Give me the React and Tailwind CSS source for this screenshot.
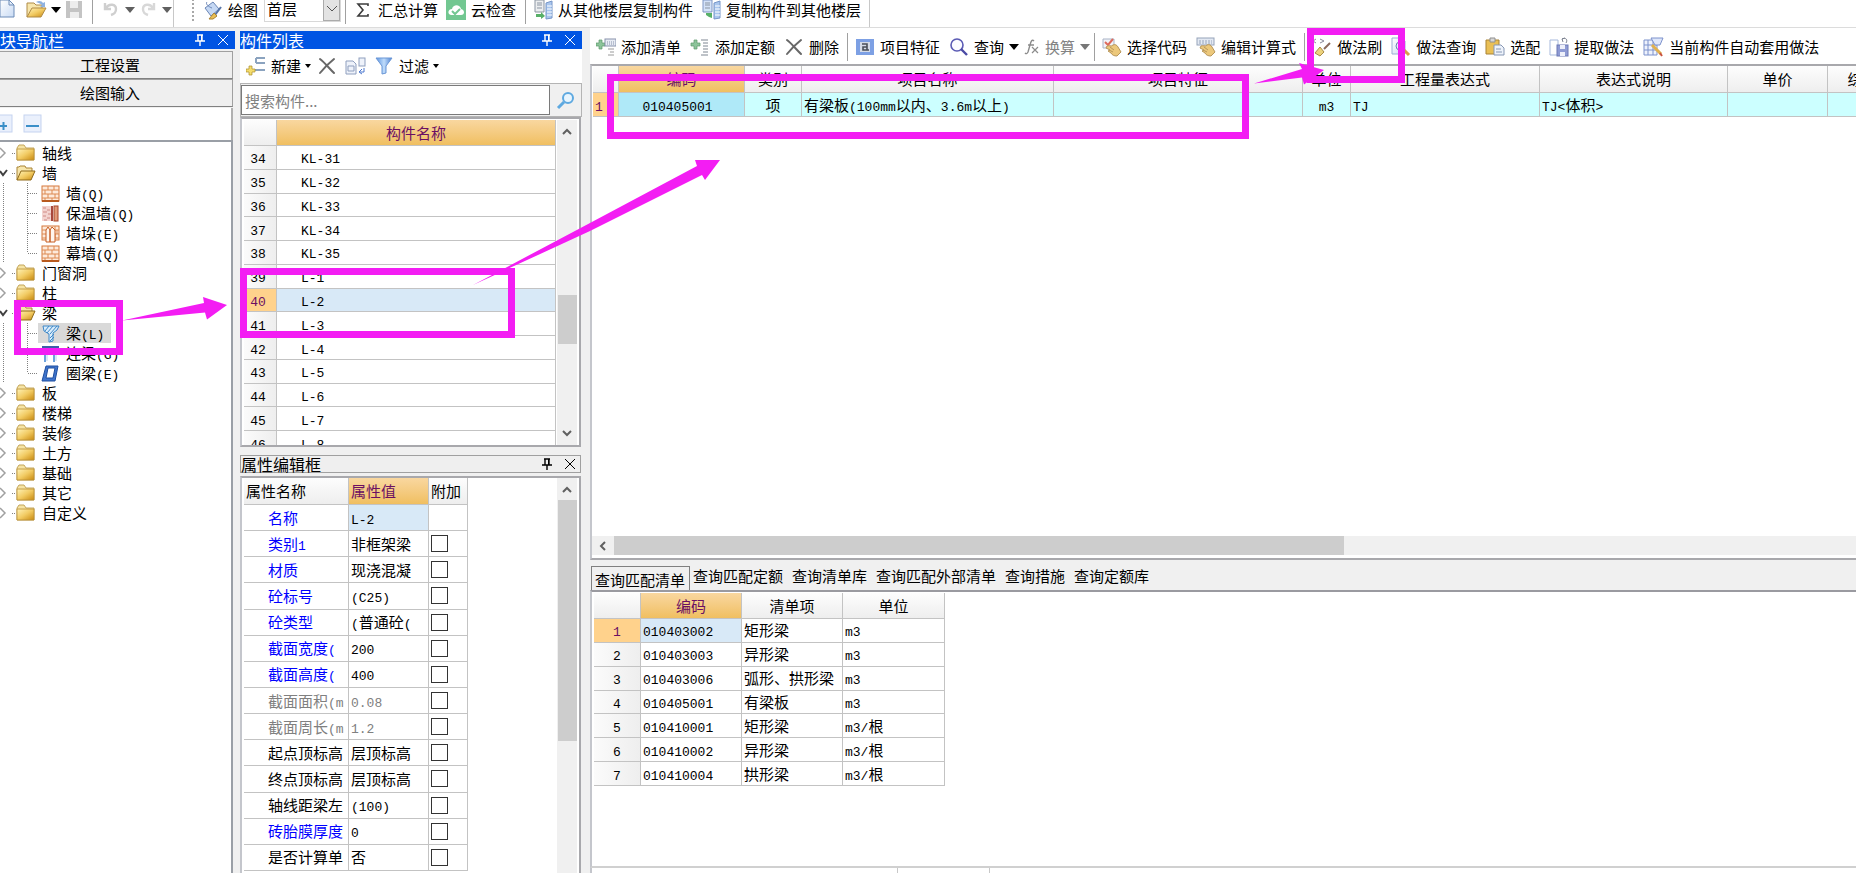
import { Fragment } from "react";
import clsx from "clsx";

const GRID_HEAD = "bg-linear-to-b from-[#fdfdfd] to-[#eeeeee]";
const GRID_HEAD_ACTIVE = "bg-linear-to-b from-[#f9d79f] to-[#f0bf60] text-[#6b0f63]";
const CELL = "border-r border-b border-[#c3c3c3] p-0 overflow-hidden whitespace-nowrap font-normal";

const tree = [
  { label: "轴线" },
  {
    label: "墙",
    open: true,
    children: [
      { label: "墙(Q)", icon: "brick" },
      { label: "保温墙(Q)", icon: "insulated" },
      { label: "墙垛(E)", icon: "pier" },
      { label: "幕墙(Q)", icon: "brick" },
    ],
  },
  { label: "门窗洞" },
  { label: "柱" },
  {
    label: "梁",
    open: true,
    children: [
      { label: "梁(L)", icon: "beam", selected: true },
      { label: "连梁(G)", icon: "linkBeam" },
      { label: "圈梁(E)", icon: "ringBeam" },
    ],
  },
  { label: "板" },
  { label: "楼梯" },
  { label: "装修" },
  { label: "土方" },
  { label: "基础" },
  { label: "其它" },
  { label: "自定义" },
];

const components = [
  "KL-31", "KL-32", "KL-33", "KL-34", "KL-35",
  "L-1", "L-2", "L-3", "L-4", "L-5", "L-6", "L-7", "L-8",
].map((name, i) => ({ no: 34 + i, name }));

const properties = [
  { name: "名称", value: "L-2", color: "text-[#0000ff]", active: true },
  { name: "类别1", value: "非框架梁", color: "text-[#0000ff]" },
  { name: "材质", value: "现浇混凝", color: "text-[#0000ff]" },
  { name: "砼标号", value: "(C25)", color: "text-[#0000ff]" },
  { name: "砼类型", value: "(普通砼(", color: "text-[#0000ff]" },
  { name: "截面宽度(", value: "200", color: "text-[#0000ff]" },
  { name: "截面高度(", value: "400", color: "text-[#0000ff]" },
  { name: "截面面积(m", value: "0.08", color: "text-[#808080]", readOnly: true },
  { name: "截面周长(m", value: "1.2", color: "text-[#808080]", readOnly: true },
  { name: "起点顶标高", value: "层顶标高" },
  { name: "终点顶标高", value: "层顶标高" },
  { name: "轴线距梁左", value: "(100)" },
  { name: "砖胎膜厚度", value: "0", color: "text-[#0000ff]" },
  { name: "是否计算单", value: "否" },
];

const matches = [
  ["010403002", "矩形梁", "m3"],
  ["010403003", "异形梁", "m3"],
  ["010403006", "弧形、拱形梁", "m3"],
  ["010405001", "有梁板", "m3"],
  ["010410001", "矩形梁", "m3/根"],
  ["010410002", "异形梁", "m3/根"],
  ["010410004", "拱形梁", "m3/根"],
];

const tabs = ["查询匹配清单", "查询匹配定额", "查询清单库", "查询匹配外部清单", "查询措施", "查询定额库"];

// Latin runs are set in the monospaced face, Chinese stays in the UI face
const Mixed = ({ children }) =>
  String(children)
    .split(/([\x20-\x7e]+)/)
    .map((part, i) =>
      i % 2 ? (
        <span key={i} className="font-['Liberation_Mono',monospace] text-[13px] leading-none">{part}</span>
      ) : (
        <Fragment key={i}>{part}</Fragment>
      )
    );

const Svg = ({ children, w = 20, h = 20, className }) => (
  <svg width={w} height={h} viewBox={`0 0 ${w} ${h}`} fill="none" className={clsx("shrink-0", className)} aria-hidden="true">
    {children}
  </svg>
);

const Defs = () => (
  <svg width="0" height="0" className="absolute" aria-hidden="true">
    <defs>
      <linearGradient id="gold" x1="0" y1="0" x2="1" y2="1">
        <stop offset="0" stopColor="#fff3b8" />
        <stop offset="0.5" stopColor="#f2cb63" />
        <stop offset="1" stopColor="#c98a10" />
      </linearGradient>
      <linearGradient id="funnel" x1="0" y1="0" x2="1" y2="0">
        <stop offset="0" stopColor="#5b93e0" />
        <stop offset="0.5" stopColor="#bfdcfb" />
        <stop offset="1" stopColor="#4d80d0" />
      </linearGradient>
      <linearGradient id="page" x1="0" y1="0" x2="1" y2="1">
        <stop offset="0" stopColor="#ffffff" />
        <stop offset="1" stopColor="#c9dbf4" />
      </linearGradient>
    </defs>
  </svg>
);

const Caret = ({ className = "text-black", small }) => (
  <Svg w={10} h={6} className={className}>
    <path d={small ? "M2 1h6L5 5z" : "M0 0h10L5 6z"} fill="currentColor" />
  </Svg>
);

const CrossIcon = () => (
  <Svg>
    <path d="M3 3c4 3 9 9 14 14M17 3C12 7 7 12 3 17" stroke="#686868" strokeWidth="2" strokeLinecap="round" />
  </Svg>
);

const Plus = ({ x = 0, y = 0, fill = "#8cc49a", stroke = "#5b9a6c" }) => (
  <path transform={`translate(${x} ${y})`} d="M3 0h3v3h3v3h-3v3h-3v-3h-3v-3h3z" fill={fill} stroke={stroke} strokeWidth="0.7" />
);

const FolderClosed = () => (
  <Svg>
    <path d="M1 5 3 2h5l2 3h8v12H1z" fill="#f5e3a4" stroke="#c4a65c" />
    <path d="M1 6h17v11H1z" fill="url(#gold)" stroke="#b98f38" strokeWidth="0.8" />
  </Svg>
);

const FolderOpen = () => (
  <Svg>
    <path d="M1 17V4h2l1-1h5l1 2h6v4" fill="#f7e6ac" stroke="#a98436" />
    <path d="M1 17 5 8h14l-4 9z" fill="url(#gold)" stroke="#8f6a1b" />
  </Svg>
);

const BrickIcon = () => (
  <Svg w={19} h={19}>
    <rect x="1" y="2" width="17" height="15" fill="#fdeadb" stroke="#d5793d" />
    <path d="M1 6h17M1 10h17M1 14h17M7 2v4M13 2v4M4 6v4M11 6v4M7 10v4M14 10v4M4 14v3M11 14v3" stroke="#dd8a52" />
    <path d="M1 17h17" stroke="#b85a1e" strokeWidth="2" />
  </Svg>
);

const InsulatedIcon = () => (
  <Svg w={19} h={19}>
    <rect x="1" y="2" width="9" height="15" fill="#f3d3cf" />
    <path d="M2 4h3M6 6h3M2 8h4M7 10h3M2 12h3M6 14h3M3 16h3" stroke="#d08a85" />
    <path d="M11 2v15" stroke="#a8483c" strokeWidth="2" />
    <rect x="13" y="2" width="4" height="15" fill="#e09a78" stroke="#a8442b" />
  </Svg>
);

const PierIcon = () => (
  <Svg w={19} h={19}>
    <rect x="1" y="2" width="17" height="14" fill="#fdeadb" stroke="#d5793d" />
    <path d="M1 6h17M1 10h17M1 14h17M14 2v4M16 6v4M14 10v4" stroke="#dd8a52" />
    <path d="M5 6l2-3 2 3v12H5zM9 6l2-3 3 3v12H9z" fill="#fff6ee" stroke="#c65f25" />
  </Svg>
);

const BeamIcon = () => (
  <Svg w={19} h={19}>
    <path d="M2 2h16l-2 4-4 3v8l-4 1V10L3 7z" fill="#d9ecfb" stroke="#3e88c8" />
    <path d="M4 7 8 2M6 9l6-7M9 10l7-8M9 14l4-4M9 17l4-4" stroke="#3e88c8" />
  </Svg>
);

const LinkBeamIcon = () => (
  <Svg w={19} h={19}>
    <path d="M1 2h17v4H1z" fill="#3c5fa8" />
    <path d="M4 6v12M13 6v12" stroke="#6da3dd" strokeWidth="2" />
    <path d="M6 6v11M15 6v11" stroke="#b8d4f0" />
  </Svg>
);

const RingBeamIcon = () => (
  <Svg w={19} h={19}>
    <path d="M5 2h12l-3 15H1z" fill="#3f74cc" stroke="#1e4fa0" />
    <path d="M7 4h7l-2 10H5z" fill="#ffffff" stroke="#1e4fa0" />
  </Svg>
);

const treeIcons = {
  brick: BrickIcon,
  insulated: InsulatedIcon,
  pier: PierIcon,
  beam: BeamIcon,
  linkBeam: LinkBeamIcon,
  ringBeam: RingBeamIcon,
};

const CopyFloorIcon = ({ to }) => (
  <Svg w={21}>
    <path d="M2 0h9v12H2z" fill={to ? "#d4e2f8" : "#eceef0"} stroke={to ? "#7e96c4" : "#8b95a2"} />
    <path d="M4 3h5M4 5h5M4 8h5" stroke="#8b95a2" />
    <path d="M13 3l6-2v17l-6 1z" fill="#a9c6ee" stroke="#7696c8" />
    <path d="M14 6h5M14 9h5M14 12h5M14 15h5" stroke="#fff" />
    <path d={to ? "M5 13h6v5l-3-1-3-2z" : "M3 14h5v-2l4 4-4 3v-2H3z"} fill="#58b068" />
  </Svg>
);

const AddListIcon = () => (
  <Svg>
    <Plus x={0} y={3} />
    <rect x="9" y="2" width="11" height="7" fill="#e8ecf4" stroke="#8792ac" />
    <path d="M11 5h8M11 7h8" stroke="#8792ac" strokeDasharray="1 1" />
    <path d="M12 12h6M14 15h4M12 18h6" stroke="#9a9a9a" />
  </Svg>
);

const AddQuotaIcon = () => (
  <Svg>
    <Plus x={1} y={3} />
    <path d="M11 3h7M13 6h5M13 9h5M13 12h5M13 15h5M11 18h7" stroke="#7f8792" />
  </Svg>
);

const FeatureIcon = () => (
  <Svg>
    <rect x="1" y="2" width="18" height="16" fill="#7da0e4" />
    <rect x="5" y="5" width="10" height="10" fill="#d5dbe6" />
    <path d="M7 7h5v6H8V10h4M12 13h2" stroke="#4a4f58" strokeWidth="1.6" />
  </Svg>
);

const LensIcon = () => (
  <Svg>
    <circle cx="8" cy="8" r="6" stroke="#5a5ab4" strokeWidth="1.6" fill="#fbfbff" />
    <path d="m12 12 6 6" stroke="#4a4aa4" strokeWidth="2.4" />
  </Svg>
);

const FxIcon = () => (
  <Svg w={16}>
    <path d="M10 4c-2-2-3 0-4 4l-2 7c-1 2-2 2-3 1M4 8h6" stroke="#8b8b8b" strokeWidth="1.4" />
    <path d="m8 10 6 6M14 10l-6 6" stroke="#8b8b8b" strokeWidth="1.2" />
  </Svg>
);

const HandCodeIcon = ({ keyboard }) => (
  <Svg>
    {keyboard ? (
      <>
        <rect x="1" y="1" width="17" height="7" fill="#e3e9f3" stroke="#96a3ba" />
        <path d="M3 4h13M3 6h13" stroke="#96a3ba" strokeDasharray="2 1" />
      </>
    ) : (
      <>
        <path d="M1 2h11v9H1z" fill="#f1f3f8" stroke="#a9b3c6" />
        <path d="m3 5 3 3 5-6" stroke="#dd6a5c" strokeWidth="2" />
      </>
    )}
    <path d="M5 9c2-1 4 1 6-1 2-1 4 0 5 2l3 5-4 4c-3 0-5-1-6-3l-3-2 2-1-4-2z" fill="#ecc87b" stroke="#b8965a" />
    <path d="M8 10l4 3M7 13l4 2" stroke="#b8965a" />
  </Svg>
);

const BrushIcon = () => (
  <Svg>
    <path d="M4 2 1 4l3 2M8 2l4 2-4 2" stroke="#8a8a9a" />
    <path d="m18 6-6 6" stroke="#8a6a5c" strokeWidth="2" />
    <path d="m8 10 4 5-4 4-5-3z" fill="#ecd27c" stroke="#a98a45" />
  </Svg>
);

const QueryMethodIcon = () => (
  <Svg>
    <path d="M1 1h10l3 3v13H1z" fill="url(#page)" stroke="#9cafd2" />
    <circle cx="9" cy="9" r="4" stroke="#6c7fae" />
    <path d="m13 13 5 5" stroke="#d99b4c" strokeWidth="3" />
  </Svg>
);

const PasteIcon = () => (
  <Svg>
    <path d="M1 3h13v14H1z" fill="#e9bf55" stroke="#a98335" />
    <path d="M5 1h5v4H5z" fill="#d7d7d7" stroke="#8f8f8f" />
    <path d="M9 8h7l3 3v7H9z" fill="#eef3fb" stroke="#8797b4" />
    <path d="M11 12h5M11 15h6" stroke="#8797b4" />
  </Svg>
);

const ExtractIcon = () => (
  <Svg>
    <path d="M1 3h8v15H1z" fill="#ffffff" stroke="#a7b9dc" />
    <rect x="8" y="8" width="11" height="11" fill="#8f9bd4" stroke="#6c78b4" />
    <path d="M11 8h5v4h-5zM11 15h5v4h-5z" fill="#eef0fa" />
    <path d="M13 2c4-2 6 1 4 4M13 2l1 3M13 2l3-1" stroke="#7c8290" />
  </Svg>
);

const AutoIcon = () => (
  <Svg w={21}>
    <path d="M1 3h13v15H1zM1 8h13M1 13h13M5 3v15M10 3v15" stroke="#7d92cc" fill="#eef2fc" />
    <path d="M8 1h12l-3 7h-5z" fill="#dfe7fa" stroke="#7d92cc" />
    <path d="m9 8 9 9" stroke="#e0b04e" strokeWidth="3" />
    <path d="m17 16 2 3" stroke="#c9533e" strokeWidth="2" />
  </Svg>
);

const NewItemIcon = () => (
  <Svg>
    <path d="M10 2h9M10 7h9M8 14h11M10 2v5" stroke="#8ba3bf" strokeWidth="2" />
    <Plus x={0} y={10} fill="#f4dc6c" stroke="#a98d2c" />
  </Svg>
);

const CopyItemIcon = () => (
  <Svg w={21}>
    <path d="M1 5h7l3 3v10H1z" fill="#eef2fa" stroke="#8f9fbe" />
    <path d="M3 10h6v5H3z" stroke="#8f9fbe" />
    <rect x="14" y="2" width="6" height="8" fill="#eef2fa" stroke="#8f9fbe" />
    <path d="M19 12v4h-4M17 13l-3 3 3 2" stroke="#4d78cf" />
  </Svg>
);

const PinIcon = () => (
  <Svg w={10} h={12}>
    <path d="M2 1h6M3 1v6M7 1v6M0 7h10M5 7v5" stroke="currentColor" strokeWidth="1.4" />
    <path d="M6 1h1v6h-1z" fill="currentColor" />
  </Svg>
);

const CloseIcon = () => (
  <Svg w={12} h={12}>
    <path d="m1 1 10 10M11 1 1 11" stroke="currentColor" />
  </Svg>
);

const ScrollArrow = ({ d }) => (
  <Svg w={10} h={10}>
    <path d={d} stroke="#606060" strokeWidth="2" />
  </Svg>
);

const TitleBar = ({ title, plain }) => (
  <div
    className={clsx(
      "flex h-[18px] shrink-0 items-center",
      plain ? "border border-[#a0a0a0] bg-[#efefef] pr-1 text-black" : "bg-[#0054e3] pr-[6px] text-white"
    )}
  >
    <h2 className="flex-1 text-[16px] leading-[18px] whitespace-nowrap">{title}</h2>
    <button type="button" aria-label="固定" className="mr-3"><PinIcon /></button>
    <button type="button" aria-label="关闭"><CloseIcon /></button>
  </div>
);

const ToolButton = ({ icon, label, caret, disabled }) => (
  <button
    type="button"
    disabled={disabled}
    className={clsx(
      "flex shrink-0 items-center gap-[5px] whitespace-nowrap",
      caret ? "mr-[5px]" : "mr-[9px]",
      disabled && "text-[#838383]"
    )}
  >
    {icon}
    {label}
    {caret && <Caret className={disabled ? "text-[#777]" : "text-black"} />}
  </button>
);

const Separator = () => <span className="-ml-px mr-[7px] h-7 w-px shrink-0 bg-[#a0a0a0]" />;

const TopBar = () => (
  <header className="flex h-7 shrink-0 overflow-hidden border-b border-[#dcdcdc] bg-white">
    <div className="flex h-[27px] shrink-0 items-center border-r border-[#c8c8c8] pb-2">
      <button type="button" aria-label="新建" className="mr-[11px]">
        <Svg w={15}>
          <path d="M0 0h9l5 5v12H0z" fill="url(#page)" stroke="#6c8cb8" />
          <path d="M9 0v5h5" stroke="#6c8cb8" />
        </Svg>
      </button>
      <button type="button" aria-label="打开" className="flex items-center gap-1">
        <Svg w={21}>
          <path d="M1 17V3h7l2 2h6v4" fill="#f7e6ac" stroke="#b08b46" />
          <path d="M1 17 6 8h14l-5 9z" fill="url(#gold)" stroke="#b08b46" />
          <path d="M10 2c3-2 6-1 7 1l2-1v5h-5l2-2c-1-1-3-2-6-3" fill="#8fb2e0" />
        </Svg>
        <Caret />
      </button>
      <button type="button" aria-label="保存" className="ml-[3px]">
        <Svg>
          <path d="M2 1h16v17H2z" fill="#c4c4c4" />
          <path d="M6 1h8v7H6zM6 12h9v6H6z" fill="#ededed" />
        </Svg>
      </button>
      <span className="mx-2 h-7 w-px bg-[#a0a0a0]" />
      <button type="button" aria-label="撤销" className="flex items-center gap-1" disabled>
        <Svg>
          <path d="M4 3v6h6M5 8c3-5 10-4 10 1 0 4-2 5-5 6" stroke="#cfcfcf" strokeWidth="2.4" />
        </Svg>
        <Caret className="text-[#606060]" />
      </button>
      <button type="button" aria-label="重做" className="mr-px ml-[3px] flex items-center gap-1" disabled>
        <Svg>
          <path d="M16 3v6h-6M15 8c-3-5-10-4-10 1 0 4 2 5 5 6" stroke="#d8d8d8" strokeWidth="2.4" />
        </Svg>
        <Caret className="text-[#606060]" />
      </button>
    </div>
    <div className="flex h-[27px] shrink-0 items-center border-r border-[#c8c8c8] pr-2 pb-2">
      <span className="mr-[9px] ml-[18px] h-[22px] border-l-2 border-dotted border-[#a8a8a8]" />
      <button type="button" className="mr-[6px] flex items-center gap-[5px]">
        <Svg>
          <path d="m2 8 8-6 6 7-8 7z" fill="#c5d8f4" stroke="#6b86b6" />
          <path d="M4 2c-2 2 2 5 5 6" stroke="#6b86b6" />
          <path d="m18 7-6 8" stroke="#5876a8" strokeWidth="2" />
          <path d="m11 13 3 3-4 3H6z" fill="#e9bf55" stroke="#a98335" />
        </Svg>
        绘图
      </button>
      <label className="flex h-6 items-center border border-t-0 border-[#d8d8d8]">
        <select aria-label="楼层" defaultValue="首层" className="w-[58px] appearance-none bg-transparent pl-[2px] outline-none">
          <option>首层</option>
        </select>
        <span className="flex h-6 w-[17px] items-center justify-center border border-[#ababab] bg-[#e3e3e3]">
          <Svg w={12} h={8}>
            <path d="m1 1 5 5 5-5" stroke="#555" />
          </Svg>
        </span>
      </label>
      <span className="mr-[7px] ml-1 h-7 w-px bg-[#a0a0a0]" />
      <button type="button" className="mr-2 flex items-center gap-[5px]">
        <Svg>
          <path d="M15 6V4H5l5 6-5 6h10v-2" stroke="#3c3c3c" strokeWidth="1.6" />
        </Svg>
        汇总计算
      </button>
      <button type="button" className="mr-[9px] flex items-center gap-[5px]">
        <Svg>
          <rect width="20" height="20" fill="#72c791" />
          <path d="M5 15c-4-1-3-6 1-6 1-5 8-5 9 0 4 1 4 6 0 6z" fill="#fff" />
          <path d="m6 11 3 3 5-5" stroke="#72c791" strokeWidth="2" />
        </Svg>
        云检查
      </button>
      <span className="mr-[7px] h-7 w-px bg-[#a0a0a0]" />
      <button type="button" className="mr-2 flex items-center gap-1">
        <CopyFloorIcon />
        从其他楼层复制构件
      </button>
      <button type="button" className="flex items-center gap-1">
        <CopyFloorIcon to />
        复制构件到其他楼层
      </button>
    </div>
  </header>
);

const TreeNode = ({ node }) => (
  <li>
    <div className="flex h-5 items-center">
      <Svg w={8} h={12}>
        {node.open ? (
          <path d="m0 4 3 4 4-5" stroke="#404040" strokeWidth="2" />
        ) : (
          <path d="m0 1 5 5-5 5" stroke="#a0a0a0" strokeWidth="1.5" />
        )}
      </Svg>
      <span className="mr-px ml-1 w-[3px] border-t border-dotted border-[#808080]" />
      {node.open ? <FolderOpen /> : <FolderClosed />}
      <span className="ml-[6px]">{node.label}</span>
    </div>
    {node.children && (
      <ul>
        {node.children.map((child, i) => {
          const Icon = treeIcons[child.icon];
          const last = i === node.children.length - 1;
          return (
            <li key={child.label} className="flex h-5 items-center">
              <Svg w={38}>
                <path d={`M3.5 0v20M27.5 0v${last ? 10 : 20}M28 10.5h10`} stroke="#808080" strokeDasharray="1 1" />
              </Svg>
              <span className={clsx("flex h-5 items-center gap-[6px] pr-[7px] pl-[3px]", child.selected && "bg-[#d9d9d9]")}>
                <Icon />
                <span><Mixed>{child.label}</Mixed></span>
              </span>
            </li>
          );
        })}
      </ul>
    )}
  </li>
);

const NavPanel = () => (
  <aside className="flex w-[235px] shrink-0 flex-col pt-[3px]">
    <TitleBar title="块导航栏" />
    <div className="mt-[2px] mr-[2px] flex shrink-0 flex-col">
      {["工程设置", "绘图输入"].map((label) => (
        <button key={label} type="button" className="h-7 border border-l-0 border-[#a0a0a0] border-b-[#808080] bg-[#efefef] pr-3">
          {label}
        </button>
      ))}
    </div>
    <div className="mt-px mr-[2px] flex h-8 shrink-0 items-center gap-[9px] border-r-2 border-[#b0b0b0] bg-white">
      <button type="button" aria-label="展开">
        <Svg w={14}>
          <rect x="-4" y="1" width="16" height="17" fill="#eaf0fc" stroke="#c5d3f0" />
          <path d="M0 12h7M3.5 8v8" stroke="#3b8fc8" strokeWidth="2" />
        </Svg>
      </button>
      <button type="button" aria-label="折叠">
        <Svg>
          <rect x="1" y="1" width="17" height="17" fill="#eaf0fc" stroke="#c5d3f0" />
          <path d="M3 12h13" stroke="#3b8fc8" strokeWidth="2" />
        </Svg>
      </button>
    </div>
    <nav className="mr-[2px] flex-1 overflow-hidden border-t-2 border-r-2 border-[#9a9fa6] bg-white pt-px">
      <ul>
        {tree.map((node) => (
          <TreeNode key={node.label} node={node} />
        ))}
      </ul>
    </nav>
  </aside>
);

const ComponentList = () => (
  <section className="flex shrink-0 flex-col">
    <TitleBar title="构件列表" />
    <div className="flex h-[34px] items-center bg-white pl-[6px]">
      <button type="button" className="mr-1 flex items-center gap-[5px]">
        <NewItemIcon />
        <span className="flex items-center gap-[2px]">新建<Caret small /></span>
      </button>
      <button type="button" aria-label="删除" className="mr-2"><CrossIcon /></button>
      <button type="button" aria-label="复制" className="mr-2"><CopyItemIcon /></button>
      <button type="button" className="flex items-center gap-[5px]">
        <Svg>
          <path d="M2 2h16l-6 8v7l-4 1v-8z" fill="url(#funnel)" stroke="#6b97d6" />
        </Svg>
        <span className="flex items-center gap-[2px]">过滤<Caret small /></span>
      </button>
    </div>
    <div className="flex h-[34px] items-center border border-[#b4b4b4] bg-[#f0f0f0]">
      <input
        type="text"
        aria-label="搜索构件"
        placeholder="搜索构件..."
        className="h-[30px] min-w-0 flex-1 border border-[#7a7a7a] bg-white px-[3px] outline-none placeholder:text-[#808080]"
      />
      <button type="button" aria-label="搜索" className="flex w-[31px] justify-center">
        <Svg>
          <circle cx="12" cy="8" r="5" stroke="#5ea9e0" strokeWidth="2" fill="#e8f5fe" />
          <path d="m8 12-6 6" stroke="#5ea9e0" strokeWidth="3" />
        </Svg>
      </button>
    </div>
    <div className="mr-px flex h-[330px] overflow-hidden border-t-2 border-r-2 border-b-2 border-l-2 border-[#a8a8ac] border-l-[#c4c6cc] bg-white pt-px pr-[2px] pl-[2px]">
      <div className="flex-1 overflow-hidden">
        <table className="h-[335px] w-[312px] table-fixed border-separate border-spacing-0">
          <colgroup>
            <col className="w-[33px]" />
            <col />
          </colgroup>
          <thead>
            <tr className="h-[26px]">
              <th className={clsx(CELL, GRID_HEAD)} aria-label="序号" />
              <th className={clsx(CELL, GRID_HEAD_ACTIVE)}>构件名称</th>
            </tr>
          </thead>
          <tbody>
            {components.map(({ no, name }) => {
              const active = name === "L-2";
              return (
                <tr key={no}>
                  <td className={clsx(CELL, "pr-1 text-center", active ? "bg-[#ffd28c] text-[#6b0f63]" : "bg-linear-to-r from-[#fbfbfb] to-[#eeeeee]")}>
                    <Mixed>{no}</Mixed>
                  </td>
                  <td className={clsx(CELL, "pl-6", active && "bg-[#d8e9f7]")}><Mixed>{name}</Mixed></td>
                </tr>
              );
            })}
          </tbody>
        </table>
      </div>
      <div className="flex w-5 flex-col items-center bg-[#f0f0f0] py-[7px]">
        <ScrollArrow d="m1 7 4-4 4 4" />
        <div className="mt-[158px] mb-auto h-[49px] w-[19px] bg-[#cdcdcd]" />
        <ScrollArrow d="m1 3 4 4 4-4" />
      </div>
    </div>
  </section>
);

const PropertyEditor = () => (
  <section className="mt-2 mr-px flex min-h-0 flex-1 flex-col">
    <TitleBar title="属性编辑框" plain />
    <div className="mt-[3px] flex min-h-0 flex-1 overflow-hidden border-t-2 border-r-2 border-l-2 border-[#a8a8ac] border-l-[#c4c6cc] bg-white pr-[2px] pl-[2px]">
      <div className="flex-1">
        <table className="h-[393px] w-[224px] table-fixed border-separate border-spacing-0 text-left">
          <colgroup>
            <col className="w-[105px]" />
            <col className="w-[80px]" />
            <col className="w-[39px]" />
          </colgroup>
          <thead>
            <tr className="h-[27px]">
              <th className={clsx(CELL, GRID_HEAD, "pl-[2px]")}>属性名称</th>
              <th className={clsx(CELL, GRID_HEAD_ACTIVE, "pl-[2px]")}>属性值</th>
              <th className={clsx(CELL, GRID_HEAD, "pl-[2px]")}>附加</th>
            </tr>
          </thead>
          <tbody>
            {properties.map((p) => (
              <tr key={p.name} className="h-[26px]">
                <td className={clsx(CELL, "pl-6", p.color)}><Mixed>{p.name}</Mixed></td>
                <td className={clsx(CELL, "pl-[2px]", p.readOnly && "text-[#808080]", p.active && "bg-[#d8e9f7]")}>
                  <Mixed>{p.value}</Mixed>
                </td>
                <td className={clsx(CELL, "pl-[2px]")}>
                  {!p.active && (
                    <input
                      type="checkbox"
                      aria-label={`附加 ${p.name}`}
                      className="block size-[17px] appearance-none border border-[#333] bg-white"
                    />
                  )}
                </td>
              </tr>
            ))}
          </tbody>
        </table>
      </div>
      <div className="flex w-5 flex-col items-center bg-[#f0f0f0] pt-[7px]">
        <ScrollArrow d="m1 7 4-4 4 4" />
        <div className="mt-[5px] h-[241px] w-[19px] shrink-0 bg-[#cdcdcd]" />
      </div>
    </div>
  </section>
);

const MethodToolbar = () => (
  <div className="flex h-9 shrink-0 items-center overflow-hidden bg-white pt-[2px] pl-[6px]">
    <ToolButton icon={<AddListIcon />} label="添加清单" />
    <ToolButton icon={<AddQuotaIcon />} label="添加定额" />
    <ToolButton icon={<CrossIcon />} label="删除" />
    <Separator />
    <ToolButton icon={<FeatureIcon />} label="项目特征" />
    <ToolButton icon={<LensIcon />} label="查询" caret />
    <ToolButton icon={<FxIcon />} label="换算" caret disabled />
    <Separator />
    <ToolButton icon={<HandCodeIcon />} label="选择代码" />
    <ToolButton icon={<HandCodeIcon keyboard />} label="编辑计算式" />
    <Separator />
    <ToolButton icon={<BrushIcon />} label="做法刷" />
    <ToolButton icon={<QueryMethodIcon />} label="做法查询" />
    <ToolButton icon={<PasteIcon />} label="选配" />
    <ToolButton icon={<ExtractIcon />} label="提取做法" />
    <ToolButton icon={<AutoIcon />} label="当前构件自动套用做法" />
  </div>
);

const MethodTable = () => (
  <section className="flex min-h-0 flex-1 flex-col border-t-2 border-b-2 border-l-2 border-[#a8a8ac] border-l-[#c4c6cc] bg-white">
    <div className="flex-1 overflow-hidden pl-px">
      <table className="w-[1335px] table-fixed border-separate border-spacing-0">
        <colgroup>
          <col className="w-[26px]" />
          <col className="w-[126px]" />
          <col className="w-[57px]" />
          <col className="w-[252px]" />
          <col className="w-[249px]" />
          <col className="w-[48px]" />
          <col className="w-[189px]" />
          <col className="w-[188px]" />
          <col className="w-[100px]" />
          <col className="w-[100px]" />
        </colgroup>
        <thead>
          <tr className="h-[27px]">
            <th className={clsx(CELL, GRID_HEAD)} aria-label="序号" />
            <th className={clsx(CELL, GRID_HEAD_ACTIVE)}>编码</th>
            {["类别", "项目名称", "项目特征", "单位", "工程量表达式", "表达式说明", "单价", "综合单价"].map((h) => (
              <th key={h} className={clsx(CELL, GRID_HEAD)}>{h}</th>
            ))}
          </tr>
        </thead>
        <tbody>
          <tr className="h-6 bg-[#ccffff]">
            <td className={clsx(CELL, "bg-[#ffd28c] pl-[2px] text-[#6b0f63]")}><Mixed>1</Mixed></td>
            <td className={clsx(CELL, "bg-[#afe9f8] pr-2 text-center")}><Mixed>010405001</Mixed></td>
            <td className={clsx(CELL, "text-center")}>项</td>
            <td className={clsx(CELL, "pl-[2px]")}><Mixed>有梁板(100mm以内、3.6m以上)</Mixed></td>
            <td className={CELL} />
            <td className={clsx(CELL, "text-center")}><Mixed>m3</Mixed></td>
            <td className={clsx(CELL, "pl-[2px]")}><Mixed>TJ</Mixed></td>
            <td className={clsx(CELL, "pl-[2px]")}><Mixed>{"TJ<体积>"}</Mixed></td>
            <td className={CELL} />
            <td className={CELL} />
          </tr>
        </tbody>
      </table>
    </div>
    <div className="mb-[3px] flex h-[19px] shrink-0 items-center bg-[#f0f0f0] pl-[6px]">
      <ScrollArrow d="M7 1 3 5l4 4" />
      <div className="ml-[6px] h-[19px] w-[59%] max-w-[730px] bg-[#cdcdcd]" />
    </div>
  </section>
);

const QueryPanel = () => (
  <section className="flex h-[313px] shrink-0 flex-col bg-[#f0f0f0]">
    <div role="tablist" className="flex h-[30px] shrink-0 items-end pl-px">
      {tabs.map((tab, i) => (
        <button
          key={tab}
          type="button"
          role="tab"
          aria-selected={i === 0}
          className={clsx(
            "whitespace-nowrap",
            i === 0
              ? "mr-[3px] h-6 border border-b-0 border-[#808080] pt-[2px] pr-1 pl-[3px] leading-[20px]"
              : "mr-[9px] mb-[2px] h-6 leading-[20px]"
          )}
        >
          {tab}
        </button>
      ))}
    </div>
    <div className="flex-1 overflow-hidden border-t-2 border-b-2 border-l-2 border-[#9a9aa0] border-b-[#d0d0d0] border-l-[#c4c6cc] bg-white pt-px pl-[2px]">
      <table className="h-[193px] w-[351px] table-fixed border-separate border-spacing-0">
        <colgroup>
          <col className="w-[47px]" />
          <col className="w-[101px]" />
          <col className="w-[101px]" />
          <col className="w-[102px]" />
        </colgroup>
        <thead>
          <tr className="h-[26px]">
            <th className={clsx(CELL, GRID_HEAD)} aria-label="序号" />
            <th className={clsx(CELL, GRID_HEAD_ACTIVE)}>编码</th>
            <th className={clsx(CELL, GRID_HEAD)}>清单项</th>
            <th className={clsx(CELL, GRID_HEAD)}>单位</th>
          </tr>
        </thead>
        <tbody>
          {matches.map(([code, name, unit], i) => (
            <tr key={code}>
              <td className={clsx(CELL, "text-center", i === 0 ? "bg-[#ffd28c] text-[#6b0f63]" : "bg-linear-to-r from-[#fbfbfb] to-[#eeeeee]")}>
                <Mixed>{i + 1}</Mixed>
              </td>
              <td className={clsx(CELL, "pl-[2px]", i === 0 && "bg-[#d8e9f7]")}><Mixed>{code}</Mixed></td>
              <td className={clsx(CELL, "pl-[2px]")}>{name}</td>
              <td className={clsx(CELL, "pl-[2px]")}><Mixed>{unit}</Mixed></td>
            </tr>
          ))}
        </tbody>
      </table>
    </div>
    <div className="flex h-[5px] shrink-0 border-l-2 border-[#c4c6cc] bg-white">
      <span className="w-[306px] border-r border-[#c8c8c8]" />
      <span className="w-[92px] border-r border-[#c8c8c8]" />
    </div>
  </section>
);

const Annotations = () => (
  <svg className="pointer-events-none absolute top-0 left-0" width="1420" height="360" viewBox="0 0 1420 360" aria-hidden="true">
    <g fill="none" stroke="#f31df3" strokeWidth="7">
      <rect x="17.5" y="303.5" width="102" height="48" />
      <rect x="243.5" y="271.5" width="268" height="63" />
      <rect x="610.5" y="77.5" width="635" height="58" />
      <rect x="1310.5" y="31.5" width="91" height="48" />
    </g>
    <g fill="#f31df3">
      <path d="M122 320.500 204 303l-1-6 24 8-20 14.500-2-7z" />
      <path d="M473 285 590 223l107-57-2-6h25l-15 20-3-5-112 56z" />
      <path d="M1254 83.500 1302 69l-3-6 25 7-20 14.500-2-7z" />
    </g>
  </svg>
);

export default function App() {
  return (
    <div className="relative flex h-screen w-full flex-col overflow-hidden bg-[#f0f0f0] font-['Noto_Sans_CJK_SC','Liberation_Sans',sans-serif] text-[15px] leading-[20px] text-black">
      <Defs />
      <TopBar />
      <main className="flex min-h-0 flex-1">
        <NavPanel />
        <div className="ml-[5px] flex w-[342px] shrink-0 flex-col pt-[3px]">
          <ComponentList />
          <PropertyEditor />
        </div>
        <div className="ml-2 flex min-w-0 flex-1 flex-col">
          <MethodToolbar />
          <MethodTable />
          <QueryPanel />
        </div>
      </main>
      <Annotations />
    </div>
  );
}
